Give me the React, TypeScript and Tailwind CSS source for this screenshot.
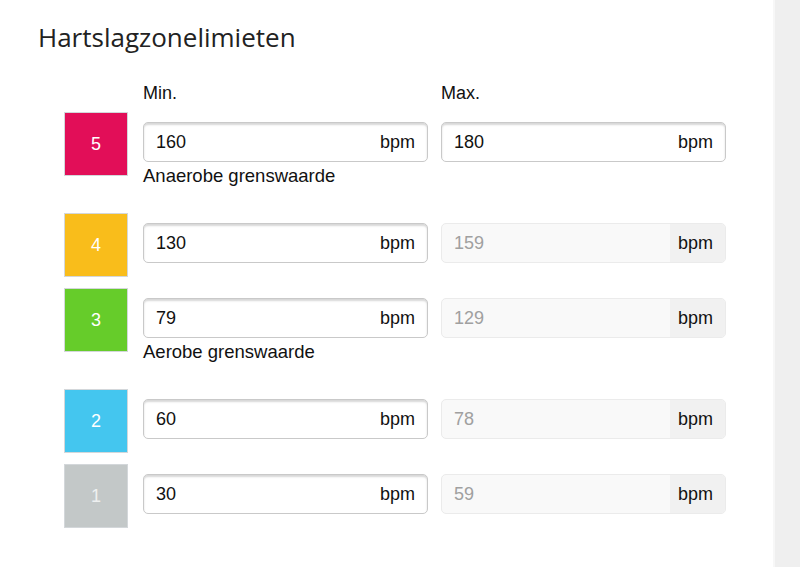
import React from 'react'

type Zone = {
  n: number
  color: string
  min: number
  max: number
  maxEditable?: boolean
  label?: string
  text?: string
}

const zones: Zone[] = [
  { n: 5, color: 'bg-[#e20e58]', min: 160, max: 180, maxEditable: true, label: 'Anaerobe grenswaarde' },
  { n: 4, color: 'bg-[#f9bd1b]', min: 130, max: 159 },
  { n: 3, color: 'bg-[#66cc2a]', min: 79, max: 129, label: 'Aerobe grenswaarde' },
  { n: 2, color: 'bg-[#44c6ef]', min: 60, max: 78 },
  { n: 1, color: 'bg-[#c3c8c8]', min: 30, max: 59, text: 'text-[#eef0f0]' },
]

function EditInput({ value }: { value: number }) {
  return (
    <div className="flex h-[40px] w-[285px] items-center justify-between rounded-[5px] border border-[#c9c9c9] bg-white px-3 text-[18px] text-[#111] shadow-[inset_0_2px_2px_rgba(0,0,0,0.16)]">
      <span>{value}</span>
      <span>bpm</span>
    </div>
  )
}

function LockedInput({ value }: { value: number }) {
  return (
    <div className="flex h-[40px] w-[285px] items-stretch overflow-hidden rounded-[5px] border border-[#ebebeb] bg-[#f9f9f9] text-[18px]">
      <span className="flex flex-1 items-center px-3 text-[#a0a0a0]">{value}</span>
      <span className="flex w-[55px] items-center justify-center bg-[#f1f1f1] pr-1 text-[#111]">bpm</span>
    </div>
  )
}

export default function App() {
  return (
    <div className="flex h-[567px] w-[800px] bg-white font-['Liberation_Sans',Arial,sans-serif]">
      <div className="flex-1 pl-[38px] pt-[19px]">
        <h1 className="font-['Open_Sans',sans-serif] text-[26px] leading-[36px] text-[#222]">Hartslagzonelimieten</h1>
        <div className="mt-[27px] flex pl-[105px] text-[18px] leading-[22px] text-[#111]">
          <div className="w-[298px]">Min.</div>
          <div>Max.</div>
        </div>
        <div className="mt-[8px] flex flex-col gap-[11px] pl-[26px]">
          {zones.map((z) => (
            <div key={z.n} className="flex">
              <div
                className={`flex h-[64px] w-[64px] items-center justify-center border border-[#d3d7da] text-[18px] ${z.color} ${z.text ?? 'text-white'}`}
              >
                {z.n}
              </div>
              <div className="ml-[15px] mt-[10px]">
                <div className="flex gap-[13px]">
                  <EditInput value={z.min} />
                  {z.maxEditable ? <EditInput value={z.max} /> : <LockedInput value={z.max} />}
                </div>
                {z.label && (
                  <div className="mt-[3px] mb-[15px] text-[18.5px] leading-[22px] text-[#111]">{z.label}</div>
                )}
              </div>
            </div>
          ))}
        </div>
      </div>
      <div className="w-[27px] border-l-2 border-[#f7f7f7] bg-[#efefef]" />
    </div>
  )
}
